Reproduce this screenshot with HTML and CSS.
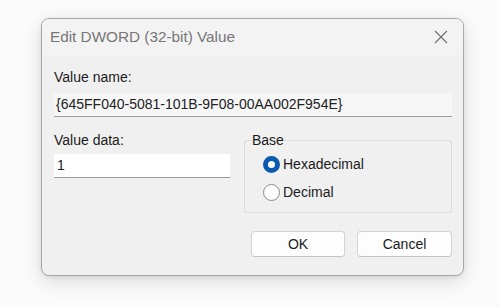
FILE: index.html
```html
<!DOCTYPE html>
<html>
<head>
<meta charset="utf-8">
<link rel="stylesheet" href="styles.css">
</head>
<body>
<div class="dialog">
  <div class="titlebar">
    <span class="title">Edit DWORD (32-bit) Value</span>
    <svg class="close" width="14" height="14" viewBox="0 0 14 14"><path d="M1 1 L13 13 M13 1 L1 13" stroke="#6e6e6e" stroke-width="1.1" fill="none"/></svg>
  </div>
  <div class="content">
    <div class="label">Value name:</div>
    <div class="field field-ro">{645FF040-5081-101B-9F08-00AA002F954E}</div>
    <div class="lower">
      <div class="col-left">
        <div class="label">Value data:</div>
        <div class="field field-edit">1</div>
      </div>
      <fieldset class="group">
        <legend>Base</legend>
        <div class="radio-row"><span class="radio checked"></span><span>Hexadecimal</span></div>
        <div class="radio-row"><span class="radio"></span><span>Decimal</span></div>
      </fieldset>
    </div>
    <div class="buttons">
      <div class="btn btn-ok">OK</div>
      <div class="btn btn-cancel">Cancel</div>
    </div>
  </div>
</div>
</body>
</html>
```
FILE: styles.css
```css
* { box-sizing: border-box; }
html, body { margin: 0; padding: 0; }
body {
  width: 500px;
  height: 307px;
  background: #fbfbfb;
  font-family: "Liberation Sans", Arial, sans-serif;
  font-size: 14px;
  color: #1b1b1b;
  padding: 18px 0 0 41px;
  overflow: hidden;
}
.dialog {
  width: 423px;
  height: 258px;
  border: 1px solid #a8a8a8;
  border-radius: 8px;
  background: #f0f0f0;
  box-shadow: 0 6px 20px rgba(0,0,0,0.13), 0 1px 4px rgba(0,0,0,0.08);
  overflow: hidden;
}
.titlebar {
  height: 36px;
  background: #f3f3f3;
  display: flex;
  align-items: center;
  justify-content: space-between;
  padding: 0 15px 0 8px;
}
.title {
  color: #777777;
  font-size: 15.3px;
}
.close { display: block; }
.content {
  padding: 13px 11px 0 12px;
}
.label {
  line-height: 18px;
  height: 18px;
}
.field {
  height: 24px;
  line-height: 23px;
  padding-left: 3px;
  border-bottom: 1px solid #9a9a9a;
  font-size: 14px;
}
.field-ro {
  margin-top: 7px;
  width: 398px;
  background: #f6f6f6;
  padding-left: 2px;
  font-size: 14px;
  color: #222;
}
.field-edit {
  margin-top: 5px;
  width: 176px;
  background: #ffffff;
  border-radius: 2px 2px 0 0;
}
.lower {
  margin-top: 14px;
  display: flex;
  gap: 14px;
  align-items: flex-start;
}
.col-left { width: 176px; }
.group {
  margin: 0;
  width: 208px;
  height: 82px;
  border: 1px solid #dcdcdc;
  border-radius: 2px;
  padding: 0 0 0 18px;
}
.group legend {
  padding: 0 1px;
  margin-left: -12px;
  line-height: 18px;
}
.radio-row {
  display: flex;
  align-items: center;
  gap: 3px;
  height: 18px;
  margin-top: 6px;
}
.radio-row + .radio-row { margin-top: 10px; }
.radio {
  width: 17px;
  height: 17px;
  border-radius: 50%;
  border: 1px solid #8a8a8a;
  background: #fdfdfd;
}
.radio.checked {
  border: 5.5px solid #0a5bb0;
  background: #ffffff;
}
.buttons {
  margin-top: 18px;
  display: flex;
  justify-content: flex-end;
  gap: 12px;
}
.btn {
  height: 26px;
  line-height: 24px;
  text-align: center;
  background: #fdfdfd;
  border: 1px solid #d3d3d3;
  border-bottom-color: #c4c4c4;
  border-radius: 4px;
}
.btn-ok { width: 94px; }
.btn-cancel { width: 95px; }
```
